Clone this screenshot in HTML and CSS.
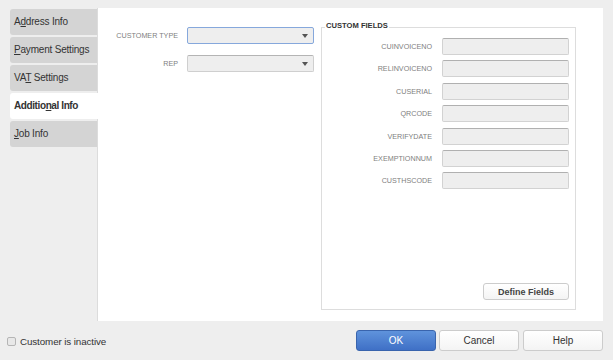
FILE: index.html
```html
<!DOCTYPE html>
<html>
<head>
<meta charset="utf-8">
<link rel="stylesheet" href="styles.css">
</head>
<body>
<div class="dialog">
  <div class="main">
    <div class="tabs">
      <div class="tab">A<u>d</u>dress Info</div>
      <div class="tab"><u>P</u>ayment Settings</div>
      <div class="tab">VA<u>T</u> Settings</div>
      <div class="tab active">Additio<u>n</u>al Info</div>
      <div class="tab"><u>J</u>ob Info</div>
    </div>
    <div class="panel">
      <div class="left">
        <div class="frow">
          <span class="lbl">CUSTOMER TYPE</span>
          <div class="select focused"><span class="arrow"></span></div>
        </div>
        <div class="frow">
          <span class="lbl">REP</span>
          <div class="select"><span class="arrow"></span></div>
        </div>
      </div>
      <div class="group">
        <div class="gtitle">CUSTOM FIELDS</div>
        <div class="cfields">
          <div class="crow"><span class="lbl">CUINVOICENO</span><div class="input"></div></div>
          <div class="crow"><span class="lbl">RELINVOICENO</span><div class="input"></div></div>
          <div class="crow"><span class="lbl">CUSERIAL</span><div class="input"></div></div>
          <div class="crow"><span class="lbl">QRCODE</span><div class="input"></div></div>
          <div class="crow"><span class="lbl">VERIFYDATE</span><div class="input"></div></div>
          <div class="crow"><span class="lbl">EXEMPTIONNUM</span><div class="input"></div></div>
          <div class="crow"><span class="lbl">CUSTHSCODE</span><div class="input"></div></div>
        </div>
        <div class="gfoot"><button class="btn small">Define Fields</button></div>
      </div>
    </div>
  </div>
  <div class="footer">
    <label class="check"><span class="box"></span>Customer is inactive</label>
    <div class="buttons">
      <button class="btn primary">OK</button>
      <button class="btn">Cancel</button>
      <button class="btn">Help</button>
    </div>
  </div>
</div>
</body>
</html>
```
FILE: styles.css
```css
html, body {
  margin: 0;
  padding: 0;
  background: #eeeeee;
  font-family: "Liberation Sans", Arial, sans-serif;
  color: #333;
}
.dialog {
  width: 613px;
  height: 360px;
  display: flex;
  flex-direction: column;
}
.main {
  display: flex;
  margin: 8px 10px 0 10px;
  height: 313px;
}
.tabs {
  width: 87px;
  display: flex;
  flex-direction: column;
  gap: 2px;
  padding-top: 1px;
}
.tab {
  height: 26px;
  background: #d4d4d4;
  border-radius: 3px 0 0 3px;
  font-size: 10px;
  letter-spacing: -0.2px;
  line-height: 26px;
  padding-left: 4px;
  color: #333;
  white-space: nowrap;
}
.tab.active {
  background: #fff;
  font-weight: bold;
  position: relative;
  z-index: 1;
  margin-right: -1px;
  letter-spacing: -0.4px;
}
.panel {
  flex: 1;
  background: #fff;
  border-left: 1px solid #dcdcdc;
  display: flex;
  padding: 19px 27px 11px 18px;
  gap: 7px;
}
.left {
  width: 198px;
  display: flex;
  flex-direction: column;
  gap: 11px;
}
.frow {
  display: flex;
  align-items: center;
  gap: 9px;
}
.lbl {
  font-size: 7.2px;
  color: #808080;
  text-align: right;
  white-space: nowrap;
}
.frow .lbl {
  width: 62px;
}
.select {
  width: 125px;
  height: 15px;
  background: #eeeeee;
  border: 1px solid #cfcfcf;
  border-top-color: #b4b4b4;
  border-radius: 2px;
  display: flex;
  align-items: center;
  justify-content: flex-end;
}
.select.focused {
  border-color: #86a8dc;
}
.arrow {
  width: 0;
  height: 0;
  border-left: 3px solid transparent;
  border-right: 3px solid transparent;
  border-top: 4px solid #555;
  margin-right: 5px;
}
.group {
  width: 253px;
  border: 1px solid #dddddd;
  display: flex;
  flex-direction: column;
  padding-bottom: 9px;
}
.gtitle {
  align-self: flex-start;
  margin: -7px 0 0 3px;
  padding: 0 1px;
  background: #fff;
  font-size: 7.6px;
  font-weight: bold;
  line-height: 9px;
  color: #333;
}
.cfields {
  display: flex;
  flex-direction: column;
  gap: 5.4px;
  margin-top: 8px;
}
.crow {
  display: flex;
  align-items: center;
  gap: 10px;
  height: 17px;
}
.crow .lbl {
  width: 110px;
}
.input {
  width: 125px;
  height: 15px;
  background: #eeeeee;
  border: 1px solid #d2d2d2;
  border-top-color: #b0b0b0;
  border-radius: 2px;
}
.gfoot {
  margin-top: auto;
  display: flex;
  justify-content: flex-end;
  padding-right: 6px;
}
.btn {
  font-family: "Liberation Sans", Arial, sans-serif;
  width: 80px;
  height: 21px;
  background: linear-gradient(#ffffff, #f4f4f4);
  border: 1px solid #cccccc;
  border-radius: 3px;
  font-size: 10px;
  color: #333;
  padding: 0;
}
.btn.small {
  width: 86px;
  height: 17px;
  font-size: 9px;
  font-weight: bold;
  color: #444;
}
.btn.primary {
  background: linear-gradient(#5f93dc, #3f70c6);
  border-color: #3964ad;
  color: #fff;
}
.footer {
  flex: 1;
  display: flex;
  align-items: center;
  justify-content: space-between;
  padding: 0 10px 0 7px;
}
.check {
  display: flex;
  align-items: center;
  gap: 4px;
  font-size: 9.8px;
  color: #333;
  letter-spacing: -0.1px;
  margin-top: 1px;
}
.box {
  width: 7px;
  height: 7px;
  border: 1px solid #b5b5b5;
  border-radius: 2px;
  background: #e8e8e8;
}
.buttons {
  display: flex;
  gap: 3px;
}
.buttons .btn:last-child {
  margin-left: 1px;
}
```
